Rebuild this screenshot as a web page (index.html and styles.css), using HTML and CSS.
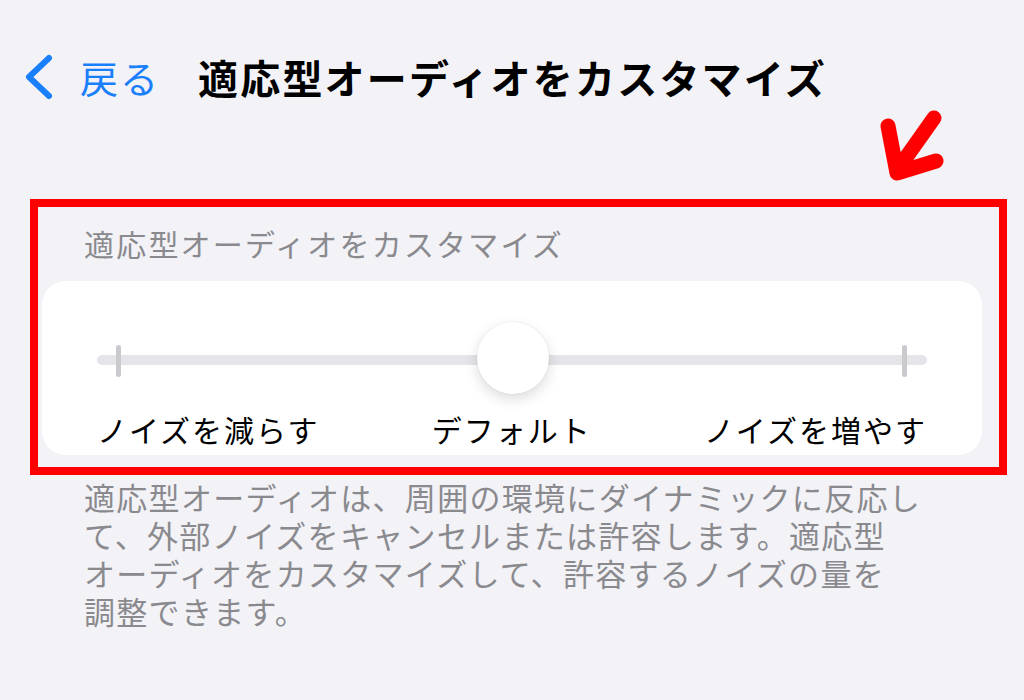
FILE: index.html
```html
<!DOCTYPE html>
<html lang="ja">
<head>
<meta charset="utf-8">
<link rel="stylesheet" href="styles.css">
</head>
<body>
<div class="nav">
  <svg class="chev" width="28" height="46" viewBox="0 0 28 46"><path d="M24 4 L4 23 L24 42" fill="none" stroke="#1a7ffa" stroke-width="6" stroke-linecap="round" stroke-linejoin="round"/></svg>
  <span class="back">戻る</span>
  <span class="title">適応型オーディオをカスタマイズ</span>
</div>
<div class="annot">
  <svg width="80" height="80" viewBox="0 0 80 80"><path d="M14 16 L23 63 L62 51 M60 8 L26 56" fill="none" stroke="#ff0000" stroke-width="15" stroke-linecap="round" stroke-linejoin="round"/></svg>
</div>
<div class="box">
  <div class="head">適応型オーディオをカスタマイズ</div>
  <div class="card">
    <div class="slider">
      <div class="track"></div>
      <div class="tick tick-l"></div>
      <div class="tick tick-r"></div>
      <div class="thumb"></div>
    </div>
    <div class="labels">
      <span>ノイズを減らす</span>
      <span>デフォルト</span>
      <span>ノイズを増やす</span>
    </div>
  </div>
</div>
<p class="desc"><span class="line">適応型オーディオは、周囲の環境にダイナミックに反応し</span><span class="line">て、外部ノイズをキャンセルまたは許容します。適応型</span><span class="line">オーディオをカスタマイズして、許容するノイズの量を</span><span class="line">調整できます。</span></p>
</body>
</html>
```
FILE: styles.css
```css
html, body {
  margin: 0;
  padding: 0;
  background: #f2f2f7;
  font-family: "Noto Sans CJK JP", "Noto Sans", sans-serif;
}
.nav {
  display: flex;
  align-items: center;
  height: 60px;
  margin-top: 47px;
  padding-left: 25px;
}
.chev {
  display: block;
  flex: none;
}
.back {
  margin-left: 27px;
  font-size: 38px;
  letter-spacing: 2px;
  color: #1a7ffa;
  line-height: 60px;
}
.title {
  margin-left: 38px;
  font-size: 40px;
  font-weight: 700;
  letter-spacing: 2.2px;
  color: #000;
  line-height: 60px;
}
.annot {
  height: 92px;
  display: flex;
  justify-content: flex-end;
  align-items: flex-start;
  padding-right: 70px;
  padding-top: 3px;
  box-sizing: border-box;
}
.annot svg { display: block; }
.box {
  margin-left: 30px;
  width: 977px;
  box-sizing: border-box;
  border: 8px solid #ff0000;
  padding: 0 17px 12px 4px;
}
.head {
  padding: 16px 0 18px 42px;
  line-height: 40px;
  font-size: 30px;
  letter-spacing: 2.2px;
  color: #8a8a8e;
}
.card {
  background: #fff;
  border-radius: 24px;
  height: 174px;
  box-sizing: border-box;
  padding: 39px 55px 4px;
}
.slider {
  position: relative;
  height: 80px;
}
.track {
  position: absolute;
  left: 0;
  right: 0;
  top: 35px;
  height: 10px;
  border-radius: 5px;
  background: #e4e4e9;
}
.tick {
  position: absolute;
  top: 25px;
  width: 5px;
  height: 32px;
  border-radius: 3px;
  background: #c9c9ce;
}
.tick-l { left: 19px; }
.tick-r { right: 20px; }
.thumb {
  position: absolute;
  left: 50%;
  top: 2px;
  width: 72px;
  height: 72px;
  margin-left: -35px;
  border-radius: 50%;
  background: #fff;
  box-shadow: 0 5px 14px rgba(0,0,0,0.14), 0 0 2px rgba(0,0,0,0.08);
}
.labels {
  display: flex;
  justify-content: space-between;
  margin-top: 9px;
  line-height: 40px;
  font-size: 30px;
  letter-spacing: 2px;
  color: #000;
}
.desc {
  margin: 3px 0 0;
  padding-left: 84px;
  font-size: 31px;
  letter-spacing: 1.3px;
  color: #8a8a8e;
}
.line {
  display: block;
  height: 38px;
  line-height: 38px;
}
```
